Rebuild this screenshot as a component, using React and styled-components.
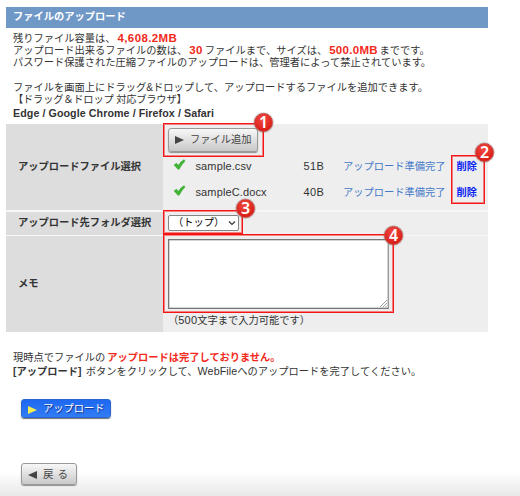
import React, { Fragment } from 'react';
import styled, { createGlobalStyle } from 'styled-components';

const GlobalStyle = createGlobalStyle`
  * {
    box-sizing: border-box;
  }

  body {
    margin: 0;
    background: #fff;
    color: #333;
    font-family: 'Liberation Sans', 'Noto Sans CJK JP', sans-serif;
    font-size: 10.25px;
    line-height: 12.5px;
    overflow: hidden;
  }
`;

const Page = styled.main`
  height: 496px;
  padding: 7px 32px 0 6px;
  background: linear-gradient(to bottom, #fff 472px, #e8e8e8 496px);
`;

const Title = styled.h1`
  display: flex;
  align-items: center;
  height: 20.5px;
  margin: 0;
  padding-left: 7px;
  background: #7098c7;
  color: #fff;
  font-size: inherit;
`;

const Intro = styled.div`
  height: 96px;
  padding: 4px 0 0 7px;
`;

const Line = styled.p`
  height: 12.5px;
  margin: 0;
  letter-spacing: ${(p) => p.$spacing || 0}px;
  white-space: pre;
`;

const Latin = styled.span`
  font-size: ${(p) => p.$size || 11}px;
  letter-spacing: ${(p) => p.$spacing || 0}px;
`;

const Strong = styled(Latin)`
  color: ${(p) => (p.$red ? '#f2291b' : 'inherit')};
  font-weight: bold;
  margin: 0 ${(p) => p.$after || 0}px 0 ${(p) => p.$before || 0}px;
`;

const Table = styled.div`
  display: grid;
  grid-template-columns: 157px 1fr;
  grid-template-rows: 86.5px 23px 96px;
  row-gap: 1.5px;
  background: #f7f7f7;
`;

const Label = styled.div`
  display: flex;
  align-items: center;
  padding-left: 12px;
  background: #ddd;
  font-weight: bold;
  white-space: nowrap;
`;

const Cell = styled.div`
  position: relative;
  padding: ${(p) => p.$top}px 0 0 5px;
  background: #eee;
`;

const Button = styled.button`
  display: flex;
  align-items: center;
  gap: 6px;
  width: ${(p) => p.$width}px;
  height: ${(p) => p.$height}px;
  padding: 1px 0 0 6px;
  border: 1px solid #999;
  border-radius: 3px;
  background: linear-gradient(to bottom, #f7f7f7, #c9c9c9);
  box-shadow: 0 1px 1px rgba(0, 0, 0, 0.4);
  color: #444;
  font: inherit;
  white-space: nowrap;
`;

const UploadButton = styled(Button)`
  padding-top: 2px;
  border-color: #2b66cf;
  background: linear-gradient(to bottom, #1e68f2, #327cf5);
  box-shadow: 0 1px 1px rgba(0, 0, 0, 0.55);
  color: #fff;
  text-shadow: 1px 1px 1px rgba(0, 0, 50, 0.6);
`;

const Files = styled.div`
  padding-top: 2px;
`;

const FileRow = styled.div`
  display: grid;
  grid-template-columns: 22.5px 108px 39.5px 113.5px auto;
  align-items: center;
  height: 26px;
  padding-left: 5px;
  white-space: nowrap;
`;

const Check = styled.svg`
  display: block;
  width: 13px;
  height: 12px;
  margin-top: -4px;
`;

const Status = styled.span`
  padding-top: 1px;
  color: #4479c9;
`;

const Delete = styled.a`
  padding-top: 1px;
  color: #0a24f5;
  font-weight: bold;
`;

const Select = styled.div`
  display: flex;
  align-items: center;
  justify-content: space-between;
  width: 71px;
  height: 16px;
  padding: 0 2px 0 4px;
  border: 1px solid #858585;
  border-radius: 2px;
  background: #fff;
  color: #000;
`;

const Memo = styled.div`
  display: flex;
  align-items: flex-end;
  justify-content: flex-end;
  width: 221px;
  height: 70px;
  padding: 1px;
  border: 1px solid #777;
  border-right-color: #999;
  border-radius: 1px;
  background: #fff;
  box-shadow: inset 0 0 0 0.5px #aaa;
`;

const Caption = styled.div`
  padding: 5px 0 0 0;
`;

const Outline = styled.div`
  position: absolute;
  left: ${(p) => p.$x}px;
  top: ${(p) => p.$y}px;
  width: ${(p) => p.$w}px;
  height: ${(p) => p.$h}px;
  border: 1px solid #f51515;
  box-shadow: inset 0 0 0 1px rgba(245, 21, 21, 0.5);
  pointer-events: none;
`;

const Badge = styled.span`
  position: absolute;
  z-index: 2;
  left: ${(p) => p.$x}px;
  top: ${(p) => p.$y}px;
  width: 19px;
  height: 19px;
  border: 1px solid #c9443e;
  border-radius: 50%;
  background: radial-gradient(circle at 45% 30%, #f24a41, #d91d18 75%);
  box-shadow: 0 0 1px 0.5px rgba(120, 100, 100, 0.6);
  color: #fff;
  font: 600 16px/17px 'Noto Sans', sans-serif;
  text-align: center;
`;

const Notice = styled.div`
  padding: 20px 0 0 7px;
`;

const Actions = styled.div`
  display: flex;
  flex-direction: column;
  gap: 45px;
  padding: 22px 0 0 15px;
`;

const Arrow = ({ left, fill = '#444' }) => (
  <svg width="9" height="10" viewBox="0 0 9 10">
    <path d={left ? 'M9 1v8L0 5z' : 'M0 1v8l9-4z'} fill={fill} />
  </svg>
);

const files = [
  { name: 'sample.csv', size: '51B' },
  { name: 'sampleC.docx', size: '40B' },
];

const FileList = () => (
  <Files>
    {files.map((file) => (
      <FileRow key={file.name}>
        <Check viewBox="0 0 13 12">
          <path d="M.8 6L3.300 3.800 5.300 6Q7.500 2.500 11 .3L12.300 2Q8.500 6 6.300 10.500H4.800Q3 8.500 .8 6z" fill="#43b238" />
        </Check>
        <Latin $size={11} $spacing={0.12}>{file.name}</Latin>
        <Latin $size={11} $spacing={0.35}>{file.size}</Latin>
        <Status>アップロード準備完了</Status>
        <Delete>削除</Delete>
      </FileRow>
    ))}
  </Files>
);

const App = () => (
  <Fragment>
    <GlobalStyle />
    <Page>
      <Title>ファイルのアップロード</Title>
      <Intro>
        <Line>
          残りファイル容量は、<Strong $red $size={11.5} $spacing={0.38} $before={2}>4,608.2MB</Strong>
        </Line>
        <Line>
          アップロード出来るファイルの数は、
          <Strong $red $size={11.5} $spacing={0.4} $before={2} $after={2}>30</Strong>
          ファイルまで、サイズは、
          <Strong $red $size={11.5} $spacing={0.3} $before={2} $after={1.5}>500.0MB</Strong>
          までです。
        </Line>
        <Line>パスワード保護された圧縮ファイルのアップロードは、管理者によって禁止されています。</Line>
        <Line />
        <Line>ファイルを画面上にドラッグ&amp;ドロップして、アップロードするファイルを追加できます。</Line>
        <Line $spacing={-0.2}>【ドラッグ＆ドロップ 対応ブラウザ】</Line>
        <Line>
          <Strong $size={10.7} $spacing={0.07}>Edge / Google Chrome / Firefox / Safari</Strong>
        </Line>
      </Intro>

      <Table>
        <Label>アップロードファイル選択</Label>
        <Cell $top={4}>
          <Button $width={90} $height={24}>
            <Arrow />
            ファイル追加
          </Button>
          <FileList />
          <Outline $x={0} $y={-1} $w={101} $h={34} />
          <Badge $x={91} $y={-11}>1</Badge>
          <Outline $x={288} $y={31} $w={33.5} $h={49.5} />
          <Badge $x={312} $y={19}>2</Badge>
        </Cell>

        <Label>アップロード先フォルダ選択</Label>
        <Cell $top={3.5}>
          <Select>
            （トップ）
            <svg width="8" height="6" viewBox="0 0 8 6">
              <path d="M1 1.5l3 3 3-3" fill="none" stroke="#333" strokeWidth="1.1" />
            </svg>
          </Select>
          <Outline $x={0} $y={-2} $w={80} $h={24} />
          <Badge $x={73} $y={-13}>3</Badge>
        </Cell>

        <Label>メモ</Label>
        <Cell $top={3}>
          <Memo>
            <svg width="7" height="7" viewBox="0 0 7 7">
              <path d="M0 7l7-7M3 7l4-4M5.5 7L7 5.5" stroke="#777" strokeWidth="0.7" />
            </svg>
          </Memo>
          <Caption>（<Latin $size={11} $spacing={0.2}>500</Latin>文字まで入力可能です）</Caption>
          <Outline $x={0} $y={-2} $w={230.5} $h={78.5} />
          <Badge $x={221} $y={-10}>4</Badge>
        </Cell>
      </Table>

      <Notice>
        <Line>
          現時点でファイルの<Strong $red $size={10.25} $before={2}>アップロードは完了しておりません。</Strong>
        </Line>
        <Line>
          <Strong $size={10.25} $after={1.5}>[アップロード]</Strong> ボタンをクリックして、<Latin $size={10.7} $spacing={0.1}>WebFile</Latin>
          へのアップロードを完了してください。
        </Line>
      </Notice>

      <Actions>
        <UploadButton $width={90} $height={19}>
          <Arrow fill="#f6ed55" />
          アップロード
        </UploadButton>
        <Button $width={56} $height={22}>
          <Arrow left />
          <Latin $size={10.5} $spacing={4}>戻る</Latin>
        </Button>
      </Actions>
    </Page>
  </Fragment>
);

export default App;
